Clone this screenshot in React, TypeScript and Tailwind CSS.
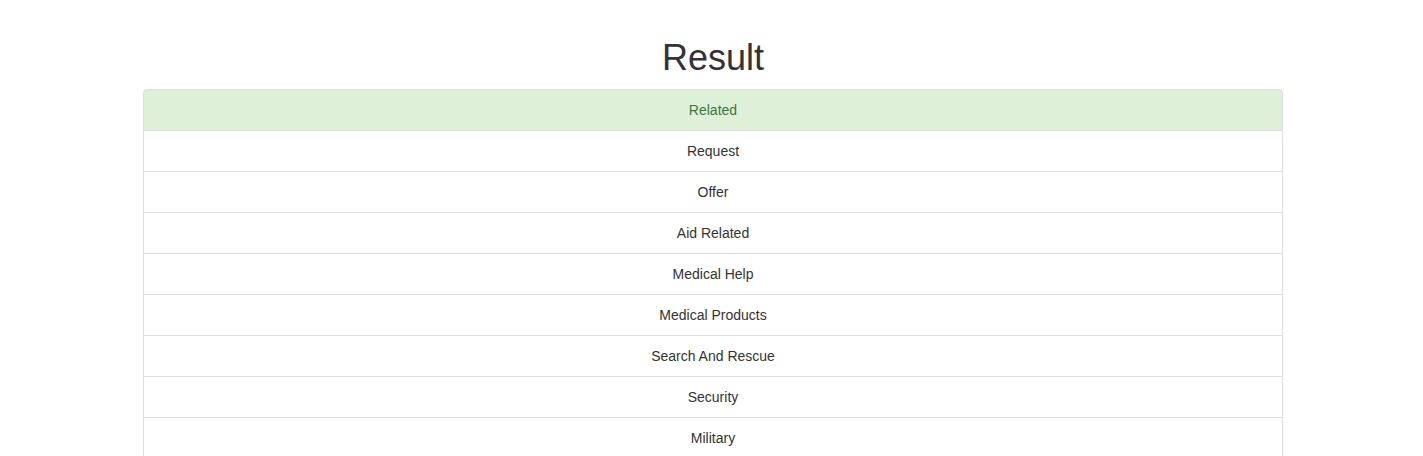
import React from 'react';

const categories = [
  'Related',
  'Request',
  'Offer',
  'Aid Related',
  'Medical Help',
  'Medical Products',
  'Search And Rescue',
  'Security',
  'Military',
  'Child Alone',
  'Water',
  'Food',
];

const App: React.FC = () => {
  return (
    <div className="min-h-screen bg-white text-[#333] font-['Liberation_Sans',Arial,sans-serif]">
      <div className="mx-auto w-[1143px] pl-[3px]">
        <h1 className="mt-[38px] mb-[11px] text-center text-[36px] leading-[1.1] font-normal">Result</h1>
        <ul className="flex flex-col">
          {categories.map((name, i) =>
            i === 0 ? (
              <li
                key={name}
                className="-mb-px rounded-t-[4px] border border-[#ddd] bg-[#dff0d8] px-[15px] py-[10px] text-center text-[14px] leading-[20px] text-[#3c763d]"
              >
                {name}
              </li>
            ) : (
              <li
                key={name}
                className="-mb-px border border-[#ddd] bg-white px-[15px] py-[10px] text-center text-[14px] leading-[20px]"
              >
                {name}
              </li>
            )
          )}
        </ul>
      </div>
    </div>
  );
};

export default App;
